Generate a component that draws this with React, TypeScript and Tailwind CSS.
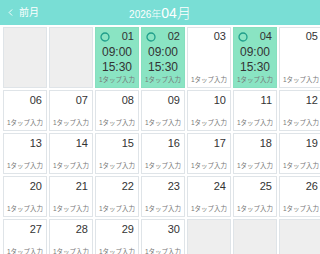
import { ChevronLeft } from 'lucide-react'

type Day = { day?: number; booked?: boolean }

const buildDays = (): Day[] => {
  const days: Day[] = [{}, {}]
  for (let d = 1; d <= 30; d++) {
    days.push({ day: d, booked: d === 1 || d === 2 || d === 4 })
  }
  while (days.length < 35) days.push({})
  return days
}

const pad = (n: number) => String(n).padStart(2, '0')

const Ring = () => (
  <svg width="10" height="10" viewBox="0 0 10 10" className="block">
    <circle cx="5" cy="5" r="4" fill="none" stroke="#1f9e8b" strokeWidth="1.3" />
  </svg>
)

const Cell = ({ item, first }: { item: Day; first: boolean }) => {
  const h = first ? 'h-[61px]' : 'h-[41px]'

  if (!item.day) {
    return <div className={`${h} border border-[#dfe4e8] bg-[#eeeeee]`} />
  }

  return (
    <div
      className={`${h} flex flex-col border ${
        item.booked ? 'border-[#86dfbf] bg-[#8ae4c3]' : 'border-[#dfe4e8] bg-white'
      }`}
    >
      <div className={`flex items-center justify-between pl-[4px] pr-[4px] ${first ? 'h-[17px]' : 'h-[19px]'}`}>
        <span>{item.booked ? <Ring /> : null}</span>
        <span className="text-[11px] leading-none text-[#333]">{pad(item.day)}</span>
      </div>
      {item.booked && (
        <div className="flex flex-col items-center text-[12px] leading-[15px] text-[#333]">
          <span>09:00</span>
          <span>15:30</span>
        </div>
      )}
      <p className="mt-auto pb-[3px] text-center text-[6.5px] leading-[8px] text-[#777]">1タップ入力</p>
    </div>
  )
}

export default function App() {
  const days = buildDays()

  return (
    <div
      className="w-[320px] h-[254px] overflow-hidden bg-white"
      style={{ fontFamily: '"Liberation Sans", "Noto Sans CJK JP", sans-serif' }}
    >
      <header className="relative flex h-[25px] items-center justify-center bg-[#79ded5] text-white">
        <div className="absolute left-[5px] top-0 flex h-full items-center gap-[3px] text-[10px]">
          <ChevronLeft size={11} strokeWidth={2} />
          <span>前月</span>
        </div>
        <div className="flex items-baseline pt-[1px] font-light">
          <span className="text-[10px]">2026年</span>
          <span className="text-[14px]">04月</span>
        </div>
      </header>

      <div className="grid grid-cols-[repeat(7,44px)] gap-[2px] pl-[3px] pt-[2px]">
        {days.map((item, i) => (
          <Cell key={i} item={item} first={i < 7} />
        ))}
      </div>
    </div>
  )
}
